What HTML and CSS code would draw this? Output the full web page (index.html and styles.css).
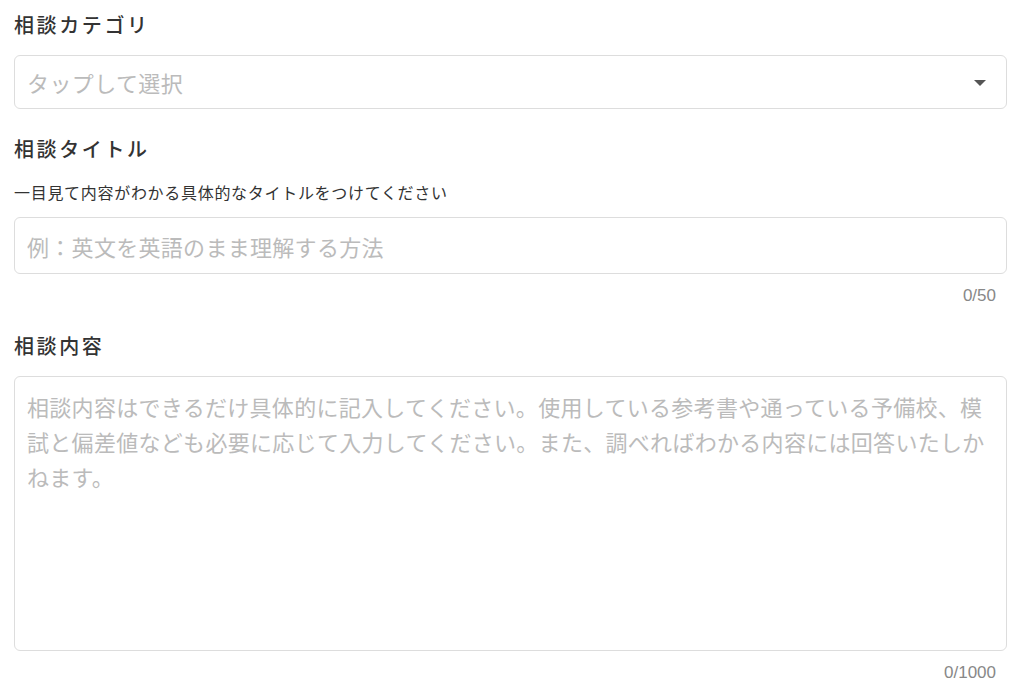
FILE: index.html
```html
<!DOCTYPE html>
<html lang="ja">
<head>
  <meta charset="UTF-8" />
  <meta name="viewport" content="width=device-width, initial-scale=1" />
  <title>相談する</title>
  <link rel="stylesheet" href="styles.css">
</head>
<body>
  <form class="form">
    <div class="field">
      <label class="field-label">相談カテゴリ</label>
      <div class="select">
        <span class="select-placeholder">タップして選択</span>
        <span class="select-arrow"></span>
      </div>
    </div>

    <div class="field">
      <label class="field-label">相談タイトル</label>
      <p class="field-hint">一目見て内容がわかる具体的なタイトルをつけてください</p>
      <input class="text-input" type="text" placeholder="例：英文を英語のまま理解する方法">
      <div class="counter">0/50</div>
    </div>

    <div class="field">
      <label class="field-label">相談内容</label>
      <textarea class="text-area" placeholder="相談内容はできるだけ具体的に記入してください。使用している参考書や通っている予備校、模試と偏差値なども必要に応じて入力してください。また、調べればわかる内容には回答いたしかねます。"></textarea>
      <div class="counter">0/1000</div>
    </div>
  </form>
</body>
</html>
```

FILE: styles.css
```css
* {
  margin: 0; padding: 0; box-sizing: border-box;
}
body, html {
  width: 100%; height: 100%;
  background: #fff;
  font-family: "Noto Sans CJK JP", "Noto Sans", sans-serif;
  color: #333;
  overflow: hidden;
}
.form {
  padding: 10px 17px 0 14px;
  display: flex;
  flex-direction: column;
  gap: 25px;
}
.field {
  display: flex;
  flex-direction: column;
}
.field-label {
  font-size: 20px;
  line-height: 30px;
  font-weight: 500;
  letter-spacing: 2.6px;
  color: #333;
  margin-bottom: 15px;
}
.field-hint {
  font-size: 16px;
  line-height: 20px;
  letter-spacing: 0.7px;
  color: #333;
  margin-top: 3px;
  margin-bottom: 15px;
}
.select {
  height: 54px;
  border: 1px solid #ddd;
  border-radius: 6px;
  display: flex;
  align-items: center;
  justify-content: space-between;
  padding: 0 20px 0 12px;
}
.select-placeholder,
.text-input::placeholder,
.text-area::placeholder {
  color: #bbb;
}
.select-placeholder {
  font-size: 22px;
  letter-spacing: 0.4px;
}
.select-arrow {
  width: 0; height: 0;
  border-left: 6px solid transparent;
  border-right: 6px solid transparent;
  border-top: 6px solid #555;
  margin-top: 2px;
}
.text-input {
  height: 57px;
  border: 1px solid #ddd;
  border-radius: 6px;
  padding: 0 12px;
  font-family: inherit;
  font-size: 22px;
  letter-spacing: 0.3px;
  color: #333;
  outline: none;
}
.text-area {
  height: 275px;
  border: 1px solid #ddd;
  border-radius: 6px;
  padding: 12px 12px;
  font-family: inherit;
  font-size: 22px;
  line-height: 35px;
  letter-spacing: 0.3px;
  color: #333;
  resize: none;
  outline: none;
}
.counter {
  align-self: flex-end;
  font-family: "Liberation Sans", Arial, sans-serif;
  font-size: 17px;
  line-height: 20px;
  color: #888;
  padding-right: 11px;
  margin-top: 12px;
}
```
